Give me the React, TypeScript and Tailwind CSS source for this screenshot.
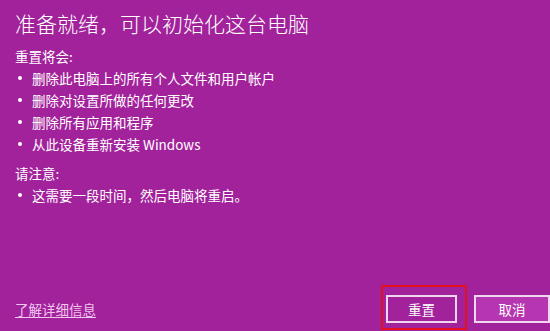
const font = "font-['Microsoft_YaHei','Noto_Sans_CJK_SC',sans-serif]";

function Bullet({ text }: { text: string }) {
  return (
    <li className="flex items-center">
      <span className="ml-[3px] mr-[10px] w-[4px] h-[4px] rounded-full bg-white shrink-0" />
      <span>{text}</span>
    </li>
  );
}

export default function App() {
  const items = [
    "删除此电脑上的所有个人文件和用户帐户",
    "删除对设置所做的任何更改",
    "删除所有应用和程序",
    "从此设备重新安装 Windows",
  ];

  return (
    <div className={`${font} w-[550px] h-[331px] bg-[#a2229b] text-white flex flex-col overflow-hidden`}>
      <h1 className="pl-[15px] pt-[8px] text-[21px] font-light leading-[30px]">
        准备就绪，可以初始化这台电脑
      </h1>

      <div className="pl-[15px] pt-[7px] text-[13.5px] leading-[22px]">
        <p>重置将会:</p>
        <ul>
          {items.map((t) => (
            <Bullet key={t} text={t} />
          ))}
        </ul>
        <p className="mt-[7px]">请注意:</p>
        <ul>
          <Bullet text="这需要一段时间，然后电脑将重启。" />
        </ul>
      </div>

      <div className="mt-auto flex items-end justify-between pl-[15px] pb-[8px]">
        <a className="mb-[4px] text-[13.5px] text-[#f0c6ee] underline underline-offset-2">了解详细信息</a>
        <div className="flex gap-[17px]">
          <div className="relative">
            <button className="w-[71px] h-[28px] border-2 border-[#f0d6ee] bg-[#a2229b] text-[13.5px]">
              重置
            </button>
            <div className="absolute left-[-5px] top-[-10px] right-[-10px] bottom-[-7px] border-2 border-[#e4101e]" />
          </div>
          <button className="w-[76px] h-[28px] border-2 border-[#f0d6ee] bg-[#b636b2] text-[13.5px]">
            取消
          </button>
        </div>
      </div>
    </div>
  );
}
